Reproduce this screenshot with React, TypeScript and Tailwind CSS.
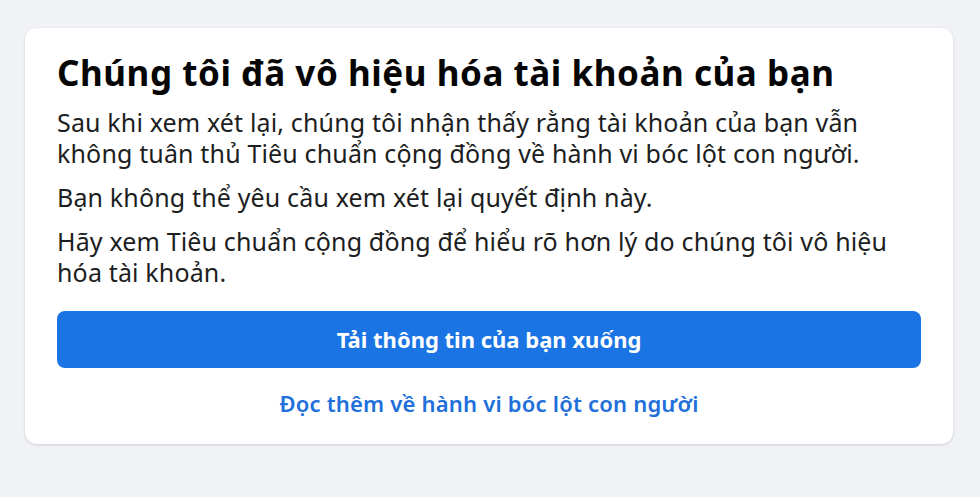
export default function App() {
  return (
    <div className="min-h-[497px] bg-[#f0f2f5] px-[25px] pt-[28px] font-['Noto_Sans',sans-serif]">
      <div className="w-[928px] rounded-xl bg-white px-8 pb-[25px] pt-[23px] shadow-[0_1px_3px_rgba(0,0,0,0.15)]">
        <h1 className="text-[35px] font-bold leading-[44px] tracking-[0.55px] text-[#050505]">
          Chúng tôi đã vô hiệu hóa tài khoản của bạn
        </h1>
        <p className="mt-[12px] text-[25px] leading-[31px] tracking-[0.15px] text-[#1c1e21]">
          Sau khi xem xét lại, chúng tôi nhận thấy rằng tài khoản của bạn vẫn
          không tuân thủ Tiêu chuẩn cộng đồng về hành vi bóc lột con người.
        </p>
        <p className="mt-[13px] text-[25px] leading-[31px] tracking-[0.15px] text-[#1c1e21]">
          Bạn không thể yêu cầu xem xét lại quyết định này.
        </p>
        <p className="mt-[13px] text-[25px] leading-[31px] tracking-[0.15px] text-[#1c1e21]">
          Hãy xem Tiêu chuẩn cộng đồng để hiểu rõ hơn lý do chúng tôi vô hiệu
          hóa tài khoản.
        </p>
        <button className="mt-[23px] flex h-[57px] w-full items-center justify-center rounded-lg bg-[#1b74e4] text-[22px] font-bold text-white">
          Tải thông tin của bạn xuống
        </button>
        <div className="mt-[20px] text-center text-[22px] font-semibold leading-[31px] tracking-[0.2px] text-[#216fdb]">
          Đọc thêm về hành vi bóc lột con người
        </div>
      </div>
    </div>
  );
}
